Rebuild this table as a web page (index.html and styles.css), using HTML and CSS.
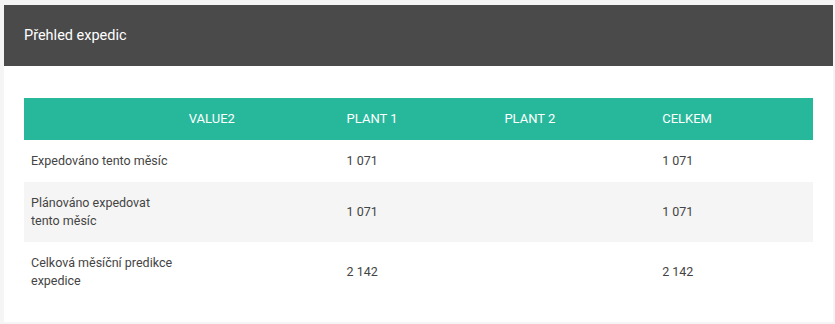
FILE: index.html
```html
<!DOCTYPE html>
<html lang="cs">
<head>
<meta charset="utf-8">
<title>Přehled expedic</title>
<link rel="stylesheet" href="styles.css">
</head>
<body>
<section class="card">
  <header class="card-header">
    <h2 class="card-title">Přehled expedic</h2>
  </header>
  <div class="card-body">
    <table class="data-table">
      <colgroup>
        <col class="col"><col class="col"><col class="col"><col class="col"><col class="col">
      </colgroup>
      <thead>
        <tr>
          <th></th>
          <th>VALUE2</th>
          <th>PLANT 1</th>
          <th>PLANT 2</th>
          <th>CELKEM</th>
        </tr>
      </thead>
      <tbody>
        <tr>
          <td>Expedováno tento měsíc</td>
          <td></td>
          <td>1 071</td>
          <td></td>
          <td>1 071</td>
        </tr>
        <tr class="alt">
          <td>Plánováno expedovat tento měsíc</td>
          <td></td>
          <td>1 071</td>
          <td></td>
          <td>1 071</td>
        </tr>
        <tr>
          <td>Celková měsíční predikce expedice</td>
          <td></td>
          <td>2 142</td>
          <td></td>
          <td>2 142</td>
        </tr>
      </tbody>
    </table>
  </div>
</section>
</body>
</html>
```

FILE: styles.css
```css
html, body {
  margin: 0;
  background: #f5f5f5;
}
body {
  padding: 5px 2px 2px 4px;
  font-family: Roboto, "Liberation Sans", sans-serif;
  color: #444444;
}
.card {
  background: #ffffff;
}
.card-header {
  background: #4a4a4a;
  height: 61px;
  display: flex;
  align-items: center;
  padding: 0 20px;
}
.card-title {
  margin: 0;
  font-size: 14.5px;
  font-weight: 400;
  color: #ffffff;
}
.card-body {
  padding: 32px 20px 20px;
}
.data-table {
  width: 100%;
  border-collapse: collapse;
  table-layout: fixed;
}
.data-table th,
.data-table td {
  text-align: left;
  padding: 12px 7px;
  line-height: 18px;
  vertical-align: middle;
}
.data-table th {
  background: #27b89b;
  color: #ffffff;
  font-size: 13px;
  font-weight: 400;
}
.data-table td {
  font-size: 12.5px;
}
.data-table .alt td {
  background: #f5f5f5;
}
```
